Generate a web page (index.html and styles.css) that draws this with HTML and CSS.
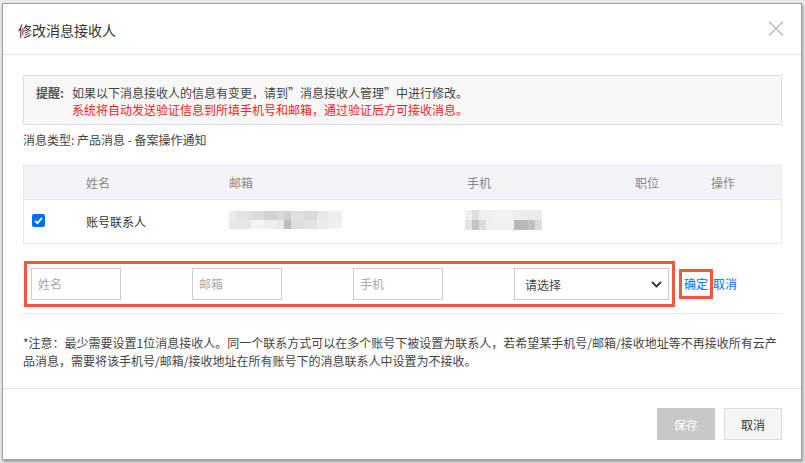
FILE: index.html
```html
<!DOCTYPE html>
<html lang="zh-CN">
<head>
<meta charset="utf-8">
<title>修改消息接收人</title>
<link rel="stylesheet" href="styles.css">
</head>
<body>
<div class="dialog">
  <div class="dlg-head">
    <div class="dlg-title">修改消息接收人</div>
    <svg class="dlg-close" width="16" height="15" viewBox="0 0 16 15"><path d="M1 0.5 L15 14.5 M15 0.5 L1 14.5" stroke="#b9b9b9" stroke-width="1.4" fill="none"/></svg>
  </div>
  <div class="dlg-body">
    <div class="notice">
      <span class="notice-label">提醒:</span>
      <div class="notice-text">
        <div>如果以下消息接收人的信息有变更，请到”消息接收人管理”中进行修改。</div>
        <div class="red">系统将自动发送验证信息到所填手机号和邮箱，通过验证后方可接收消息。</div>
      </div>
    </div>
    <div class="msg-type">消息类型: 产品消息 - 备案操作通知</div>

    <div class="table">
      <div class="trow thead">
        <div class="cell"></div>
        <div class="cell">姓名</div>
        <div class="cell">邮箱</div>
        <div class="cell">手机</div>
        <div class="cell">职位</div>
        <div class="cell">操作</div>
      </div>
      <div class="trow tbody">
        <div class="cell">
          <svg class="check" width="13" height="13" viewBox="0 0 13 13"><rect width="13" height="13" rx="2" fill="#006eff"/><path d="M3 6.8 L5.4 9.1 L10 3.9" stroke="#fff" stroke-width="1.8" fill="none"/></svg>
        </div>
        <div class="cell">账号联系人</div>
        <div class="cell"><div class="mosaic mosaic-mail"><div class="m-row m1"></div><div class="m-row m2"></div></div></div>
        <div class="cell"><div class="mosaic mosaic-phone"><div class="m-row p1"></div><div class="m-row p2"></div></div></div>
        <div class="cell"></div>
        <div class="cell"></div>
      </div>
    </div>

    <div class="edit-row">
      <div class="edit-box">
        <div class="field">姓名</div>
        <div class="field">邮箱</div>
        <div class="field">手机</div>
        <div class="select">
          <span>请选择</span>
          <svg width="11" height="7" viewBox="0 0 11 7"><path d="M1 1 L5.5 5.5 L10 1" stroke="#333" stroke-width="1.8" fill="none"/></svg>
        </div>
      </div>
      <a class="link ok">确定</a><a class="link">取消</a>
    </div>

    <div class="note">*注意：最少需要设置1位消息接收人。同一个联系方式可以在多个账号下被设置为联系人，若希望某手机号/邮箱/接收地址等不再接收所有云产<br>品消息，需要将该手机号/邮箱/接收地址在所有账号下的消息联系人中设置为不接收。</div>
  </div>
  <div class="dlg-foot">
    <button class="btn btn-disabled">保存</button>
    <button class="btn btn-default">取消</button>
  </div>
</div>
</body>
</html>
```

FILE: styles.css
```css
* { box-sizing: border-box; }
html, body { margin: 0; padding: 0; }
body {
  width: 805px;
  height: 463px;
  background: #e9e9e9;
  font-family: "Noto Sans CJK SC", "Noto Sans", sans-serif;
  font-size: 12px;
  color: #444;
  overflow: hidden;
}
.dialog {
  margin: 3px 0 0 2px;
  width: 800px;
  height: 457px;
  background: #fff;
  border: 1px solid #9e9e9e;
  box-shadow: 1px 2px 3px rgba(0,0,0,0.35);
  display: flex;
  flex-direction: column;
}
.dlg-head {
  height: 51px;
  border-bottom: 1px solid #e3e3e3;
  padding: 16px 15px 0 15px;
  display: flex;
  justify-content: space-between;
  align-items: flex-start;
}
.dlg-title {
  font-size: 14px;
  line-height: 20px;
  color: #333;
}
.dlg-close { margin: 1px 2px 0 0; }
.dlg-body {
  padding: 20px 19px 0 20px;
  flex: 1;
}
.notice {
  display: flex;
  height: 50px;
  background: #f8f8f8;
  border: 1px solid #dddddd;
  padding: 8px 12px 0 12px;
  line-height: 17px;
  color: #444;
}
.notice-label { font-weight: bold; color: #555; width: 36px; flex: none; }
.red { color: #ff1a1a; }
.msg-type {
  margin-top: 7px;
  line-height: 16px;
  color: #444;
}
.table {
  margin-top: 17px;
  border: 1px solid #e5e8ec;
}
.trow {
  display: grid;
  grid-template-columns: 62px 143px 238px 168px 76px 1fr;
  align-items: center;
}
.thead {
  height: 34px;
  background: #f3f4f7;
  color: #888;
  border-bottom: 1px solid #e5e8ec;
}
.tbody {
  height: 43px;
  color: #333;
}
.check { display: block; margin-left: 8px; margin-top: -2px; }
.mosaic { width: 118px; height: 18px; margin-left: -5px; margin-top: -3px; }
.mosaic-phone { width: 77px; height: 20px; margin-left: -2px; }
.m-row { height: 50%; }
.m1 {
  background: linear-gradient(90deg, #fff 0 5px, #ececec 5px 12px, #e2e2e2 12px 27px, #dcdcdc 27px 40px, #d3d3d3 40px 53px, #d8d8d8 53px 60px, #cfcfcf 60px 67px, #e0e0e0 67px 80px, #dadada 80px 93px, #e8e8e8 93px 105px, #efefef 105px 118px);
}
.m2 {
  background: linear-gradient(90deg, #fff 0 5px, #e8e8e8 5px 12px, #e6e6e6 12px 27px, #f4f4f4 27px 40px, #eeeeee 40px 53px, #ebebeb 53px 60px, #bdbdbd 60px 67px, #dddddd 67px 80px, #e2e2e2 80px 93px, #ececec 93px 105px, #f2f2f2 105px 118px);
}
.p1 {
  background: linear-gradient(90deg, #efefef 0 7px, #e0e0e0 7px 14px, #efefef 14px 27px, #f1f1f1 27px 49px, #ededed 49px 63px, #ececec 63px 77px);
}
.p2 {
  background: linear-gradient(90deg, #e4e4e4 0 7px, #c4c4c4 7px 14px, #dcdcdc 14px 21px, #f0f0f0 21px 49px, #b8b8b8 49px 63px, #c2c2c2 63px 70px, #dcdcdc 70px 77px);
}
.edit-row {
  margin-top: 17px;
  margin-left: 1px;
  display: flex;
  align-items: center;
  padding-bottom: 6px;
  border-bottom: 1px solid #e5e8ec;
  margin-right: 0;
}
.edit-row { margin-left: 0; padding-left: 1px; }
.edit-box {
  width: 651px;
  height: 46px;
  border: 3px solid #f2593a;
  padding: 4px 3px 4px 4px;
  display: flex;
  gap: 71px;
}
.field {
  width: 90px;
  height: 32px;
  border: 1px solid #cccccc;
  padding-left: 6px;
  line-height: 30px;
  color: #a9a9a9;
}
.select {
  width: 155px;
  height: 32px;
  border: 1px solid #cccccc;
  display: flex;
  align-items: center;
  justify-content: space-between;
  padding: 0 6px 0 10px;
  color: #444;
}
.link {
  color: #006eff;
  line-height: 24px;
  cursor: pointer;
}
.ok {
  margin-left: 4px;
  border: 3px solid #f2593a;
  padding: 0 2px;
  height: 30px;
  display: flex;
  align-items: center;
}
.note {
  margin-top: 20px;
  line-height: 18px;
  color: #444;
  white-space: nowrap;
}
.dlg-foot {
  height: 71px;
  border-top: 1px solid #e3e3e3;
  padding: 19px 19px 0 0;
  display: flex;
  justify-content: flex-end;
  gap: 9px;
}
.btn {
  width: 58px;
  height: 32px;
  font-family: inherit;
  font-size: 12px;
  padding: 0;
}
.btn-disabled {
  background: #c8c8c8;
  border: 1px solid #c8c8c8;
  color: #fff;
}
.btn-default {
  background: #f5f5f5;
  border: 1px solid #dcdcdc;
  color: #333;
}
```
